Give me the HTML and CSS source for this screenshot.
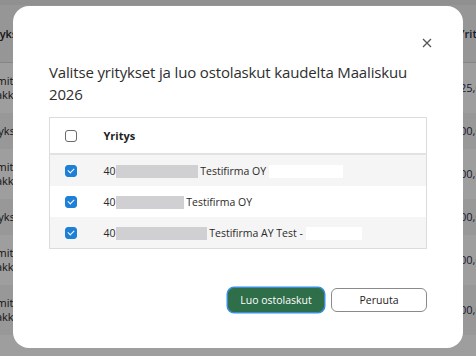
FILE: index.html
```html
<!DOCTYPE html>
<html lang="fi">
<head>
    <meta charset="UTF-8">
    <meta name="viewport" content="width=device-width, initial-scale=1.0">
    <title>Ostolaskut</title>
    <link rel="stylesheet" href="styles.css">
</head>
<body>
    <div class="page">
        <div class="page-head">
            <span class="cell-left">Yritykset</span>
            <span class="cell-right">Yritys</span>
        </div>
        <div class="page-row tall">
            <span class="cell-left">Toimittaja<br>Asiakkaanne</span>
            <span class="cell-right">125,03</span>
        </div>
        <div class="page-row alt short">
            <span class="cell-left">Yritykset</span>
            <span class="cell-right">100,00</span>
        </div>
        <div class="page-row tall">
            <span class="cell-left">Toimittaja<br>Asiakkaanne</span>
            <span class="cell-right">100,00</span>
        </div>
        <div class="page-row alt short">
            <span class="cell-left">Yritykset</span>
            <span class="cell-right">100,00</span>
        </div>
        <div class="page-row tall">
            <span class="cell-left">Toimittaja<br>Asiakkaanne</span>
            <span class="cell-right">100,00</span>
        </div>
        <div class="page-row alt tall">
            <span class="cell-left">Toimittaja<br>Asiakkaanne</span>
            <span class="cell-right">100,00</span>
        </div>
    </div>

    <div class="backdrop"></div>

    <div class="modal">
        <div class="modal-top">
            <button class="close" aria-label="Sulje">
                <svg width="10" height="10" viewBox="0 0 10 10"><path d="M1 1 L9 9 M9 1 L1 9" stroke="#555" stroke-width="1.3" fill="none"/></svg>
            </button>
        </div>
        <h2 class="modal-title">Valitse yritykset ja luo ostolaskut kaudelta Maaliskuu 2026</h2>

        <table class="companies">
            <thead>
                <tr>
                    <th class="check-col"><span class="box"></span></th>
                    <th>Yritys</th>
                </tr>
            </thead>
            <tbody>
                <tr>
                    <td class="check-col"><span class="box checked"></span></td>
                    <td>40<span class="mask" style="width:82px"></span> Testifirma OY -<span class="blank" style="width:74px"></span></td>
                </tr>
                <tr>
                    <td class="check-col"><span class="box checked"></span></td>
                    <td>40<span class="mask" style="width:68px"></span> Testifirma OY</td>
                </tr>
                <tr>
                    <td class="check-col"><span class="box checked"></span></td>
                    <td>40<span class="mask" style="width:91px"></span> Testifirma AY Test -<span class="blank gap" style="width:56px"></span></td>
                </tr>
            </tbody>
        </table>

        <div class="actions">
            <button class="btn primary">Luo ostolaskut</button>
            <button class="btn">Peruuta</button>
        </div>
    </div>
</body>
</html>
```

FILE: styles.css
```css
body {
    margin: 0;
    font-family: "Open Sans", "Noto Sans", sans-serif;
    color: #222;
    width: 476px;
    height: 356px;
    overflow: hidden;
    position: relative;
}
.page {
    background: #fff;
    height: 356px;
    border-top: 5px solid #e8e8e8;
}
.page-head, .page-row {
    display: flex;
    justify-content: space-between;
    align-items: center;
    font-size: 11px;
    line-height: 14px;
}
.page-head {
    height: 57px;
    background: #f2f2f2;
    border-bottom: 1px solid #d8d8d8;
    font-weight: 600;
}
.page-row.tall { height: 50px; }
.page-row.short { height: 36px; }
.page-row.alt { background: #f6f6f6; }
.cell-left {
    margin-left: -19px;
    white-space: nowrap;
}
.cell-right {
    margin-right: -12px;
    color: #2a2a4a;
}
.backdrop {
    position: absolute;
    inset: 0;
    background: rgba(0, 0, 0, 0.38);
}
.modal {
    position: absolute;
    left: 13px;
    top: 6px;
    width: 450px;
    height: 342px;
    box-sizing: border-box;
    padding: 30px 36px 36px;
    background: #fff;
    border-radius: 16px;
    display: flex;
    flex-direction: column;
}
.modal-top {
    display: flex;
    justify-content: flex-end;
    height: 14px;
}
.close {
    border: none;
    background: none;
    padding: 0;
    width: 14px;
    height: 14px;
    display: flex;
    align-items: center;
    justify-content: center;
    margin-right: -7px;
    cursor: pointer;
}
.modal-title {
    margin: 11px 0 0;
    font-size: 15px;
    letter-spacing: -0.15px;
    font-weight: 400;
    line-height: 22px;
    color: #2e2e2e;
}
.companies {
    margin-top: 12px;
    width: 100%;
    border-collapse: collapse;
    border: 1px solid #dcdcdc;
    font-size: 10.5px;
}
.companies th {
    height: 35px;
    text-align: left;
    font-size: 11px;
    font-weight: 700;
    border-bottom: 2px solid #e2e2e2;
    padding: 0;
}
.companies td {
    height: 31px;
    padding: 0;
    white-space: nowrap;
    color: #2a2a2a;
}
.companies tbody tr:nth-child(odd) {
    background: #f5f5f5;
}
.check-col {
    width: 54px;
    padding-left: 15px !important;
    box-sizing: border-box;
}
.box {
    display: block;
    width: 10px;
    height: 10px;
    border: 1.5px solid #6a6a6a;
    border-radius: 3px;
    position: relative;
}
.box.checked {
    background: #1e7fd6;
    border-color: #1e7fd6;
}
.box.checked::after {
    content: "";
    position: absolute;
    left: 3px;
    top: 1px;
    width: 3px;
    height: 5px;
    border: solid #fff;
    border-width: 0 1.5px 1.5px 0;
    transform: rotate(45deg);
}
.mask {
    display: inline-block;
    height: 13px;
    background: #d0d0d2;
    vertical-align: -3px;
}
.blank {
    display: inline-block;
    height: 13px;
    background: #fff;
    vertical-align: -3px;
    margin-left: -3px;
}
.blank.gap {
    margin-left: 3px;
}
.actions {
    margin-top: auto;
    display: flex;
    justify-content: flex-end;
    gap: 7px;
}
.btn {
    width: 96px;
    height: 24px;
    font-family: inherit;
    font-size: 10.5px;
    white-space: nowrap;
    padding: 0;
    background: #fff;
    color: #222;
    border: 1px solid #8a8a8a;
    border-radius: 6px;
    cursor: pointer;
}
.btn.primary {
    background: #2e6e48;
    color: #fff;
    border: 1px solid #2e6e48;
    box-shadow: 0 0 0 1.5px #3a8fdc;
}
```
